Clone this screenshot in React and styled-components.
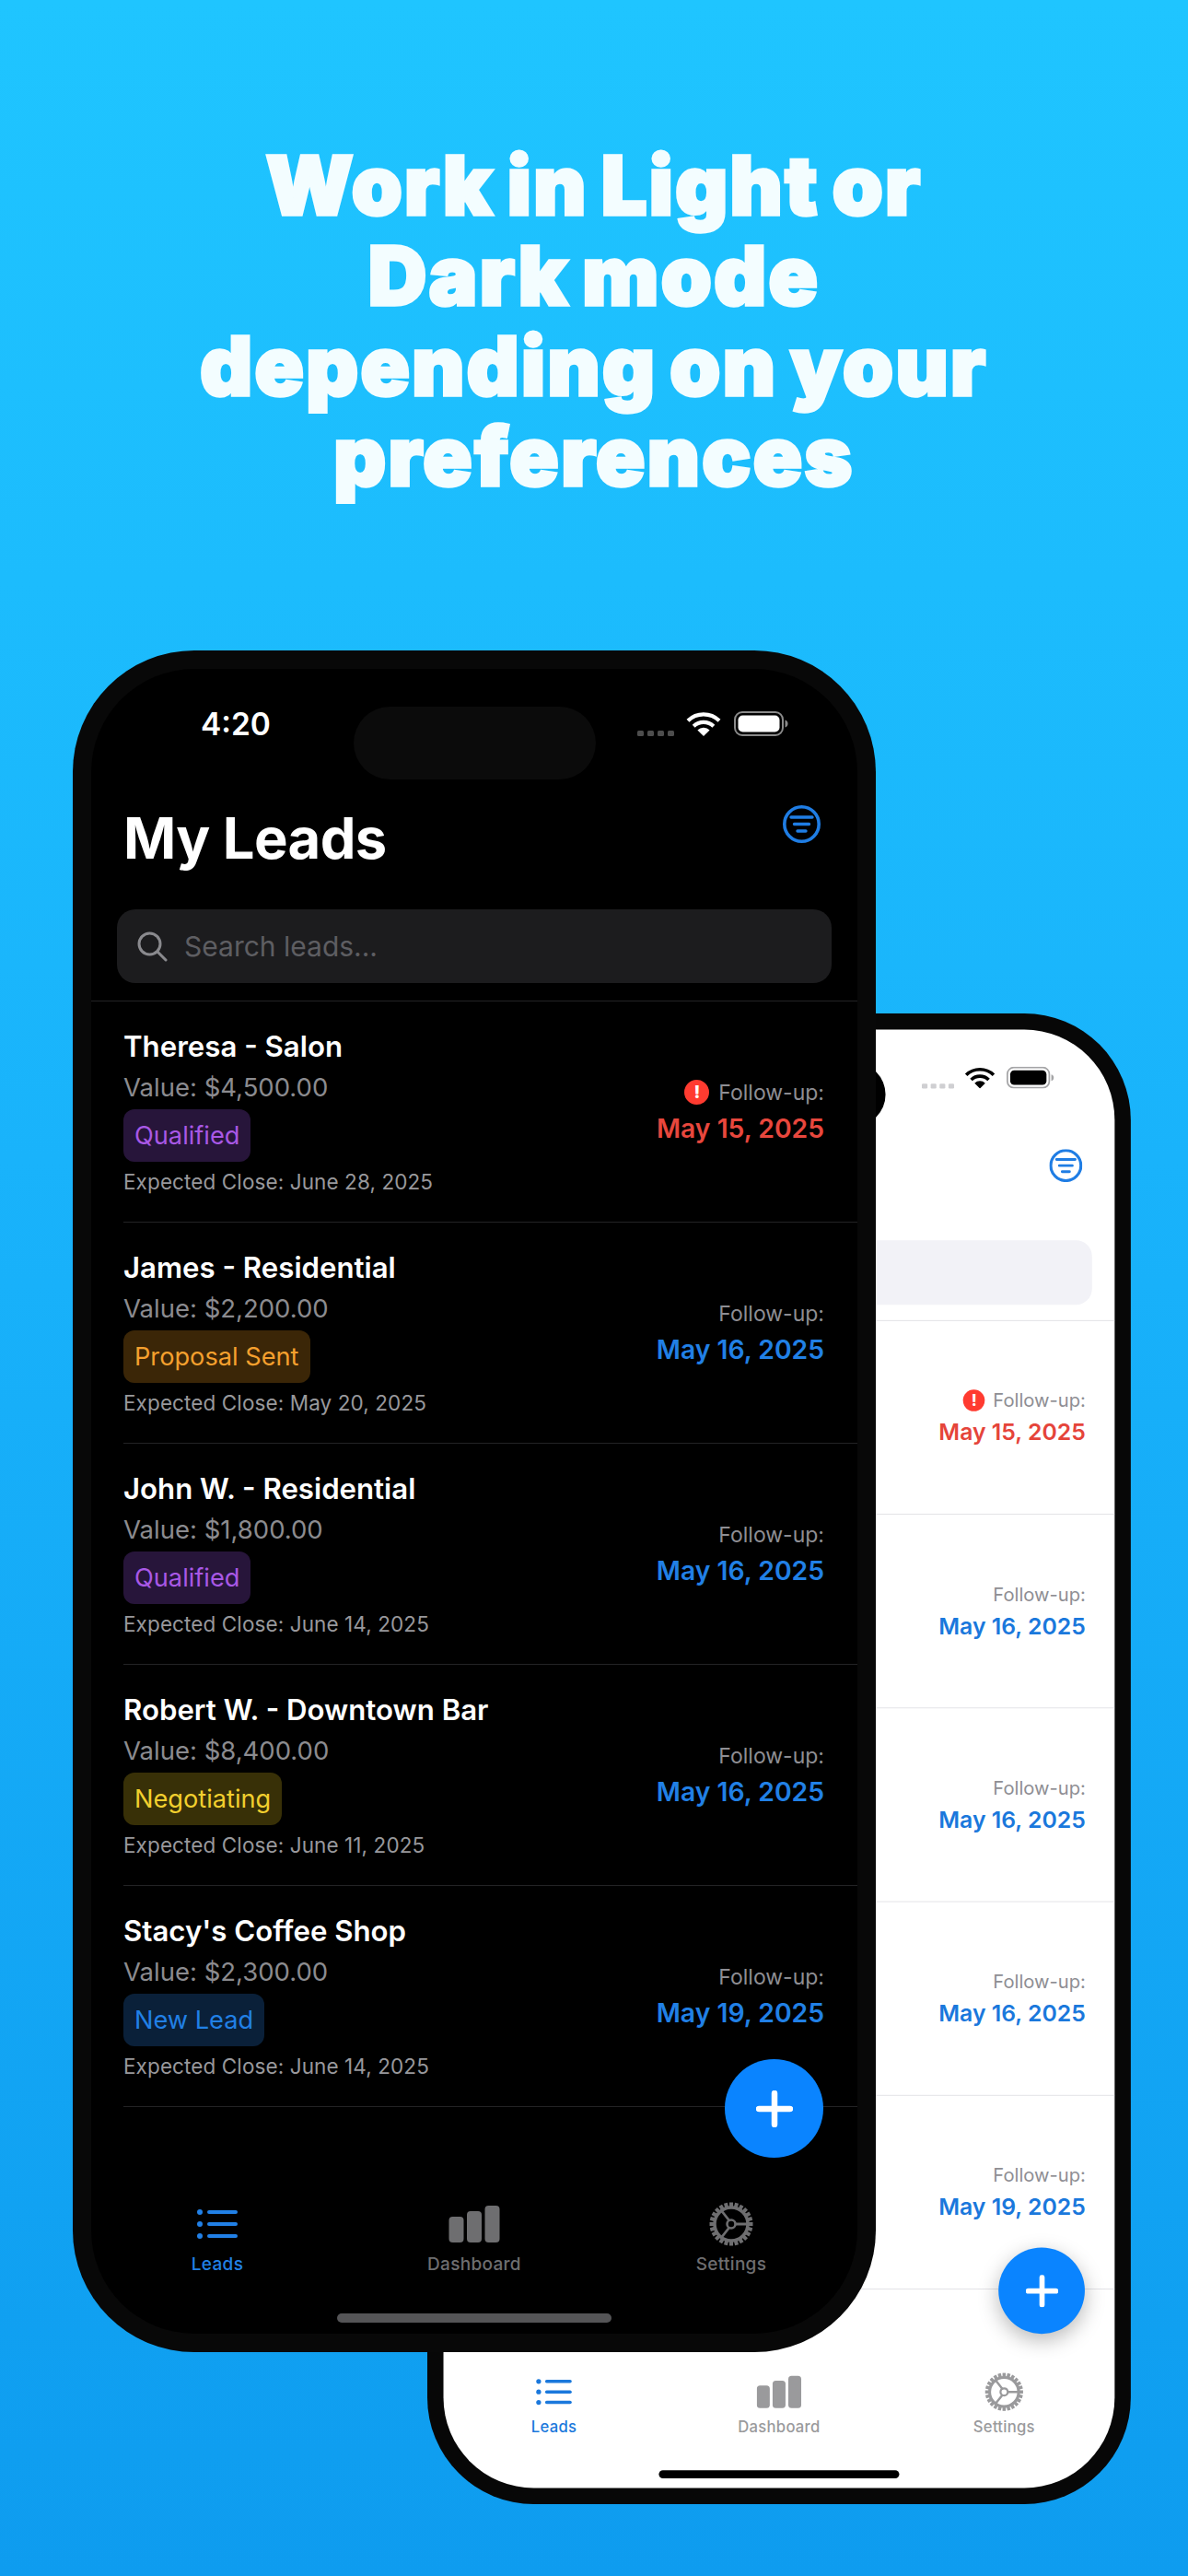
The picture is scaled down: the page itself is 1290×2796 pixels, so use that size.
import React from 'react';
import styled, { createGlobalStyle, ThemeProvider } from 'styled-components';

const GlobalStyle = createGlobalStyle`
  html, body { margin: 0; padding: 0; }
  body { font-family: Inter, "Liberation Sans", sans-serif; }
`;

const darkTheme = {
  bezel: '#080808', screen: '#000000', island: '#0b0b0b', text: '#ffffff',
  signal: '#4d4d4d', batteryRim: '#8a8a8a', search: '#1c1c1e', searchIcon: '#8a8a8e', placeholder: '#5e5e62',
  divider: '#232325', value: '#8b8b8f', close: '#98989c', follow: '#8e8e93',
  blue: '#2180e6', red: '#e8473d', muted: '#6e6e70', home: '#555557',
  fabShadow: 'none',
};
const lightTheme = {
  bezel: '#070707', screen: '#ffffff', island: '#000000', text: '#000000',
  signal: '#cfcfd2', batteryRim: '#a4a4a6', search: '#f2f2f7', searchIcon: '#8a8a8e', placeholder: '#9a9a9e',
  divider: '#dfdfe3', value: '#8b8b8f', close: '#6e6e73', follow: '#8e8e93',
  blue: '#1a78dc', red: '#e5443a', muted: '#9a9a9c', home: '#000000',
  fabShadow: '0 8px 26px rgba(0,0,0,.28)',
};

const badgeColors = {
  qualified: ['#27153a', '#a958e6'],
  proposal: ['#3b2607', '#f5a02e'],
  negotiating: ['#383007', '#f2cf2e'],
  fresh: ['#0a2039', '#2180e6'],
};

const Page = styled.div`
  position: relative;
  width: 1290px;
  height: 2796px;
  overflow: hidden;
  background: linear-gradient(180deg, #1fc5ff 0%, #19b3fb 45%, #0e9cef 100%);
`;

const Headline = styled.h1`
  margin: 0;
  padding-top: 152px;
  text-align: center;
  font-family: Inter, "Liberation Sans", sans-serif;
  font-weight: 900;
  font-size: 88px;
  line-height: 98px;
  letter-spacing: 2.4px;
  word-spacing: -6px;
  color: #f3fdff;
  -webkit-text-stroke: 3.5px #f3fdff;
`;

const Device = styled.div`
  position: absolute;
  left: ${p => p.$left}px;
  top: ${p => p.$top}px;
  width: 872px;
  height: 1847px;
  box-sizing: border-box;
  padding: 20px;
  border-radius: 132px;
  background: ${p => p.theme.bezel};
  transform: scale(${p => p.$scale});
  transform-origin: 0 0;
`;

const Screen = styled.div`
  position: relative;
  height: 100%;
  display: flex;
  flex-direction: column;
  overflow: hidden;
  border-radius: 112px;
  background: ${p => p.theme.screen};
  color: ${p => p.theme.text};
`;

const StatusBar = styled.div`
  height: 120px;
  box-sizing: border-box;
  flex: none;
  display: flex;
  align-items: flex-start;
  padding: 40px 74px 0 119px;
`;

const Time = styled.span`
  font-size: 33.500px;
  font-weight: 600;
  line-height: 40px;
`;

const StatusIcons = styled.div`
  margin-left: auto;
  display: flex;
  align-items: flex-end;
  gap: 14px;
  padding-top: 6px;
`;

const SignalDots = styled.div`
  display: flex;
  gap: 4px;
  margin-right: -1px;
`;

const SignalDot = styled.span`
  width: 7px;
  height: 6px;
  border-radius: 1.5px;
  background: ${p => p.theme.signal};
`;

const Island = styled.div`
  position: absolute;
  top: 41px;
  left: 285px;
  width: 263px;
  height: 79px;
  border-radius: 40px;
  background: ${p => p.theme.island};
`;

const Header = styled.div`
  flex: none;
  height: 72px;
  margin-top: 28px;
  padding: 0 40px 0 35px;
  display: flex;
  align-items: flex-start;
`;

const Title = styled.h2`
  margin: 0;
  font-size: 61.500px;
  font-weight: 700;
  line-height: 72px;
  letter-spacing: -0.6px;
`;

const FilterSlot = styled.div`
  margin-left: auto;
  display: flex;
`;

const SearchBar = styled.div`
  flex: none;
  height: 80px;
  margin: 41px 28px 19px;
  padding: 0 21px;
  display: flex;
  align-items: center;
  gap: 18px;
  border-radius: 20px;
  background: ${p => p.theme.search};
  color: ${p => p.theme.searchIcon};
`;

const Placeholder = styled.span`
  font-size: 30px;
  color: ${p => p.theme.placeholder};
`;

const List = styled.div`
  flex: none;
  border-top: 1px solid ${p => p.theme.divider};
`;

const Row = styled.div`
  height: 240px;
  box-sizing: border-box;
  margin-left: 35px;
  padding: 29px 36px 0 0;
  display: flex;
  border-bottom: 1px solid ${p => p.theme.divider};
`;

const LeadInfo = styled.div`
  display: flex;
  flex-direction: column;
  align-items: flex-start;
`;

const LeadName = styled.div`
  font-size: 31.200px;
  font-weight: 600;
  line-height: 40px;
`;

const LeadValue = styled.div`
  margin-top: 6px;
  font-size: 27.500px;
  line-height: 36px;
  color: ${p => p.theme.value};
`;

const Badge = styled.div`
  margin: 6px 0 7px;
  height: 57px;
  padding: 0 12px;
  display: flex;
  align-items: center;
  border-radius: 12px;
  font-size: 27.200px;
  background: ${p => badgeColors[p.$kind][0]};
  color: ${p => badgeColors[p.$kind][1]};
`;

const CloseDate = styled.div`
  font-size: 22.500px;
  line-height: 30px;
  letter-spacing: 0.1px;
  color: ${p => p.theme.close};
`;

const FollowUp = styled.div`
  align-self: center;
  margin: -29px 0 0 auto;
  display: flex;
  flex-direction: column;
  align-items: flex-end;
  gap: 4px;
`;

const FollowLabel = styled.div`
  display: flex;
  align-items: center;
  gap: 10px;
  font-size: 23px;
  line-height: 32px;
  color: ${p => p.theme.follow};
`;

const AlertDot = styled.span`
  width: 27px;
  height: 27px;
  display: flex;
  align-items: center;
  justify-content: center;
  border-radius: 50%;
  font-size: 19px;
  font-weight: 800;
  color: #fff;
  background: #ff3b30;
`;

const FollowDate = styled.div`
  font-size: 28.300px;
  font-weight: 600;
  line-height: 38px;
  color: ${p => (p.$overdue ? p.theme.red : p.theme.blue)};
`;

const Fab = styled.div`
  position: absolute;
  right: 37px;
  bottom: 191px;
  width: 107px;
  height: 107px;
  display: flex;
  align-items: center;
  justify-content: center;
  border-radius: 50%;
  background: #0a84ff;
  box-shadow: ${p => p.theme.fabShadow};
`;

const TabBar = styled.div`
  margin-top: auto;
  flex: none;
  display: grid;
  grid-template-columns: repeat(3, 279px);
  justify-content: center;
`;

const Tab = styled.div`
  display: flex;
  flex-direction: column;
  align-items: center;
  gap: 4px;
  color: ${p => (p.$active ? p.theme.blue : p.theme.muted)};
`;

const TabLabel = styled.span`
  font-size: 19px;
  font-weight: 500;
  line-height: 26px;
  letter-spacing: 0.3px;
`;

const HomeBar = styled.div`
  flex: none;
  width: 298px;
  height: 10px;
  margin: 40px auto 12px;
  border-radius: 5px;
  background: ${p => p.theme.home};
`;

const WifiIcon = () => (
  <svg width="38" height="26" viewBox="0 0 38 26" fill="none" stroke="currentColor" strokeWidth="4.2">
    <path d="M2 9.2a24.5 24.5 0 0 1 34 0" />
    <path d="M8.2 15.2a15.6 15.6 0 0 1 21.6 0" />
    <path d="M19 26l-6.6-6.6a9.4 9.4 0 0 1 13.2 0z" fill="currentColor" stroke="none" />
  </svg>
);

const BatteryIcon = ({ rim }) => (
  <svg width="60" height="27" viewBox="0 0 60 27" fill="none">
    <rect x="1" y="1" width="52" height="25" rx="8" stroke={rim} strokeWidth="2" />
    <rect x="4.5" y="4.5" width="45" height="18" rx="5" fill="currentColor" />
    <path d="M55.5 9.5c2 .5 3 2 3 4s-1 3.500-3 4z" fill={rim} />
  </svg>
);

const FilterIcon = () => (
  <svg width="41" height="41" viewBox="0 0 41 41" fill="none" stroke="#1f7de4" strokeLinecap="round">
    <circle cx="20.500" cy="20.500" r="18.700" strokeWidth="3.600" />
    <path d="M9 13h23M12.500 20.500h16M16 28h9" strokeWidth="3.400" />
  </svg>
);

const SearchIcon = () => (
  <svg width="34" height="34" viewBox="0 0 34 34" fill="none" stroke="currentColor" strokeWidth="3" strokeLinecap="round">
    <circle cx="14.500" cy="14.500" r="11.500" />
    <path d="M23 23l9 9" />
  </svg>
);

const PlusIcon = () => (
  <svg width="40" height="40" viewBox="0 0 40 40" stroke="#fff" strokeWidth="6.500" strokeLinecap="round">
    <path d="M20 3v34M3 20h34" />
  </svg>
);

const ListIcon = () => (
  <svg width="56" height="56" viewBox="0 0 56 56" fill="currentColor">
    <circle cx="9" cy="16" r="3" /><circle cx="9" cy="29" r="3" /><circle cx="9" cy="42" r="3" />
    <rect x="17" y="14" width="33" height="4" rx="2" /><rect x="17" y="27" width="33" height="4" rx="2" /><rect x="17" y="40" width="33" height="4" rx="2" />
  </svg>
);

const BarsIcon = () => (
  <svg width="56" height="56" viewBox="0 0 56 56" fill="currentColor">
    <rect x="0.500" y="21" width="16" height="28" rx="4" />
    <rect x="20" y="15" width="16" height="34" rx="4" />
    <rect x="39.500" y="9" width="16" height="40" rx="4" />
  </svg>
);

const GearIcon = () => {
  const teeth = Array.from({ length: 24 }, (_, i) => i * 15);
  return (
    <svg width="56" height="56" viewBox="0 0 56 56" fill="none" stroke="currentColor">
      <circle cx="28" cy="29" r="18" strokeWidth="3.500" />
      {teeth.map(a => (
        <rect key={a} x="26" y="5.500" width="4" height="6" fill="currentColor" stroke="none" transform={`rotate(${a} 28 29)`} />
      ))}
      <circle cx="28" cy="29" r="4.500" strokeWidth="2.600" />
      <path d="M32.500 29H46M25.700 25L17 14M25.700 33L17 44" strokeWidth="2.800" />
    </svg>
  );
};

const leads = [
  { name: 'Theresa - Salon', value: '$4,500.00', stage: 'Qualified', kind: 'qualified', close: 'June 28, 2025', follow: 'May 15, 2025', overdue: true },
  { name: 'James - Residential', value: '$2,200.00', stage: 'Proposal Sent', kind: 'proposal', close: 'May 20, 2025', follow: 'May 16, 2025' },
  { name: 'John W. - Residential', value: '$1,800.00', stage: 'Qualified', kind: 'qualified', close: 'June 14, 2025', follow: 'May 16, 2025' },
  { name: 'Robert W. - Downtown Bar', value: '$8,400.00', stage: 'Negotiating', kind: 'negotiating', close: 'June 11, 2025', follow: 'May 16, 2025' },
  { name: "Stacy's Coffee Shop", value: '$2,300.00', stage: 'New Lead', kind: 'fresh', close: 'June 14, 2025', follow: 'May 19, 2025' },
];

/* `covered` leaves out what the phone in front hides, so only the visible parts of the back phone are drawn. */
const Phone = ({ mode, left, top, scale, covered }) => {
  const theme = mode === 'dark' ? darkTheme : lightTheme;
  return (
    <ThemeProvider theme={theme}>
      <Device $left={left} $top={top} $scale={scale}>
        <Screen>
          <StatusBar>
            {!covered && <Time>4:20</Time>}
            <StatusIcons>
              <SignalDots>{[0, 1, 2, 3].map(i => <SignalDot key={i} />)}</SignalDots>
              <WifiIcon />
              <BatteryIcon rim={theme.batteryRim} />
            </StatusIcons>
          </StatusBar>
          <Island />
          <Header>
            {!covered && <Title>My Leads</Title>}
            <FilterSlot><FilterIcon /></FilterSlot>
          </Header>
          <SearchBar>
            {!covered && <SearchIcon />}
            {!covered && <Placeholder>Search leads...</Placeholder>}
          </SearchBar>
          <List>
            {leads.map(l => (
              <Row key={l.name}>
                {!covered && (
                  <LeadInfo>
                    <LeadName>{l.name}</LeadName>
                    <LeadValue>Value: {l.value}</LeadValue>
                    <Badge $kind={l.kind}>{l.stage}</Badge>
                    <CloseDate>Expected Close: {l.close}</CloseDate>
                  </LeadInfo>
                )}
                <FollowUp>
                  <FollowLabel>
                    {l.overdue && <AlertDot>!</AlertDot>}
                    Follow-up:
                  </FollowLabel>
                  <FollowDate $overdue={l.overdue}>{l.follow}</FollowDate>
                </FollowUp>
              </Row>
            ))}
          </List>
          <Fab><PlusIcon /></Fab>
          <TabBar>
            <Tab $active><ListIcon /><TabLabel>Leads</TabLabel></Tab>
            <Tab><BarsIcon /><TabLabel>Dashboard</TabLabel></Tab>
            <Tab><GearIcon /><TabLabel>Settings</TabLabel></Tab>
          </TabBar>
          <HomeBar />
        </Screen>
      </Device>
    </ThemeProvider>
  );
};

export default function App() {
  return (
    <Page>
      <GlobalStyle />
      <Headline>Work in Light or<br />Dark mode<br />depending on your<br />preferences</Headline>
      <Phone mode="light" left={464} top={1100} scale={0.876} covered />
      <Phone mode="dark" left={79} top={706} scale={1} />
    </Page>
  );
}
